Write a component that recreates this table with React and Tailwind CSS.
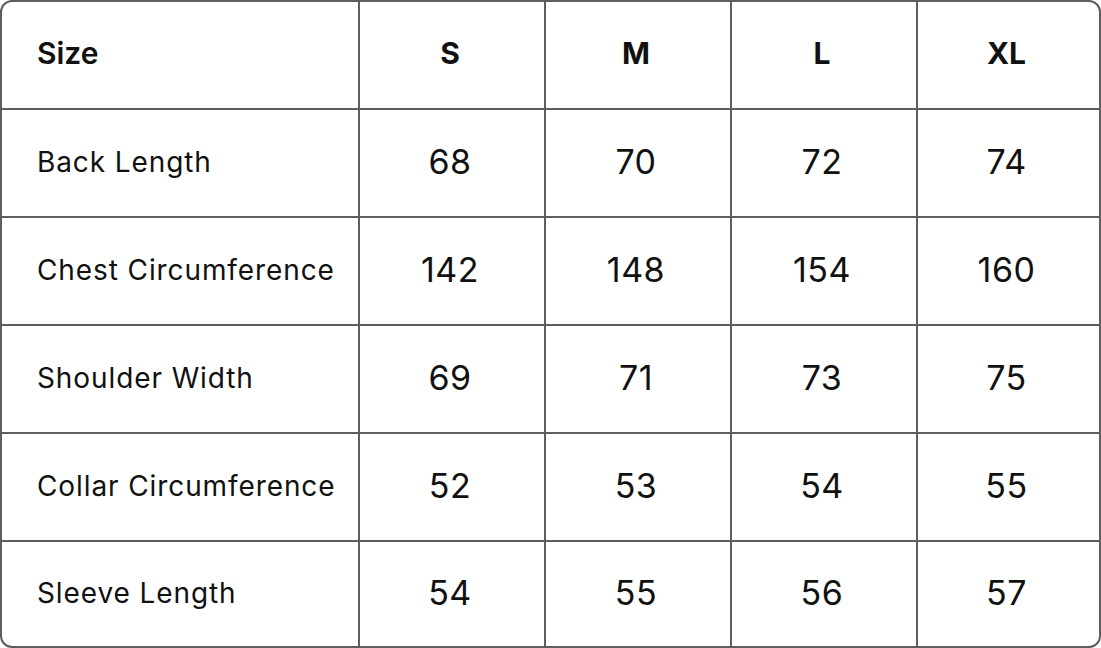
import React from "react";

const sizes = ["S", "M", "L", "XL"];
const rows = [
  ["Back Length", 68, 70, 72, 74],
  ["Chest Circumference", 142, 148, 154, 160],
  ["Shoulder Width", 69, 71, 73, 75],
  ["Collar Circumference", 52, 53, 54, 55],
  ["Sleeve Length", 54, 55, 56, 57],
];

export default function App() {
  return (
    <div className="w-[1101px] h-[648px] bg-white" style={{ fontFamily: "Inter, 'Liberation Sans', sans-serif" }}>
      <div className="w-full h-full border-2 border-[#5e5e5e] bg-[#5e5e5e] rounded-[12px] overflow-hidden grid grid-cols-[356px_184px_184px_184px_181px] grid-rows-[106px_106px_106px_106px_106px_104px] gap-[2px] text-[#111]">
        <div className="bg-white flex items-center pl-[35px] pb-[4px] text-[30px] font-semibold">Size</div>
        {sizes.map((s) => (
          <div key={s} className="bg-white flex items-center justify-center pb-[4px] pr-[4px] text-[30px] font-bold">{s}</div>
        ))}
        {rows.map((r) => (
          <React.Fragment key={r[0]}>
            <div className="bg-white flex items-center pl-[35px] pb-[2px] text-[28px] tracking-[0.9px]">{r[0]}</div>
            {r.slice(1).map((v, i) => (
              <div key={i} className="bg-white flex items-center justify-center pb-[4px] pr-[4px] text-[34px] tracking-[0.5px]">{v}</div>
            ))}
          </React.Fragment>
        ))}
      </div>
    </div>
  );
}
